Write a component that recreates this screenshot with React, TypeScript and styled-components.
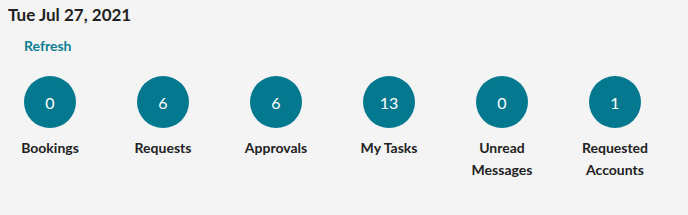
import React from 'react'
import styled, { createGlobalStyle } from 'styled-components'

const GlobalStyle = createGlobalStyle`
    body {
        margin: 0;
        background: #f4f4f4;
        font-family: Lato, "Open Sans", sans-serif;
        color: #222;
    }
`

const stats = [
    { count: 0, label: 'Bookings' },
    { count: 6, label: 'Requests' },
    { count: 6, label: 'Approvals' },
    { count: 13, label: 'My Tasks' },
    { count: 0, label: 'Unread Messages' },
    { count: 1, label: 'Requested Accounts' },
]

const App: React.FC = () => {
    return (
        <>
            <GlobalStyle />
            <Page>
                <DateTitle>Tue Jul 27, 2021</DateTitle>
                <RefreshLink href="#">Refresh</RefreshLink>
                <StatRow>
                    {stats.map((s) => (
                        <Stat key={s.label}>
                            <Circle>{s.count}</Circle>
                            <Label>{s.label}</Label>
                        </Stat>
                    ))}
                </StatRow>
            </Page>
        </>
    )
}

export default App

const Page = styled.div`
    width: 688px;
    height: 215px;
    display: flex;
    flex-direction: column;
`

const DateTitle = styled.h2`
    margin: 4px 0 0 8px;
    font-size: 17px;
    font-weight: 700;
    line-height: 22px;
    color: #222;
`

const RefreshLink = styled.a`
    align-self: flex-start;
    margin: 11px 0 0 24px;
    font-size: 14px;
    font-weight: 700;
    line-height: 18px;
    color: #0d7f93;
    text-decoration: none;
`

const StatRow = styled.div`
    display: flex;
    gap: 13px;
    margin-top: 21px;
`

const Stat = styled.div`
    width: 100px;
    display: flex;
    flex-direction: column;
    align-items: center;
`

const Circle = styled.div`
    width: 52px;
    height: 52px;
    border-radius: 50%;
    background: #03788f;
    color: #fff;
    font-size: 16px;
    display: flex;
    align-items: center;
    justify-content: center;
`

const Label = styled.div`
    margin-top: 9px;
    width: 80px;
    text-align: center;
    font-size: 14px;
    font-weight: 700;
    line-height: 22px;
    color: #222;
`
